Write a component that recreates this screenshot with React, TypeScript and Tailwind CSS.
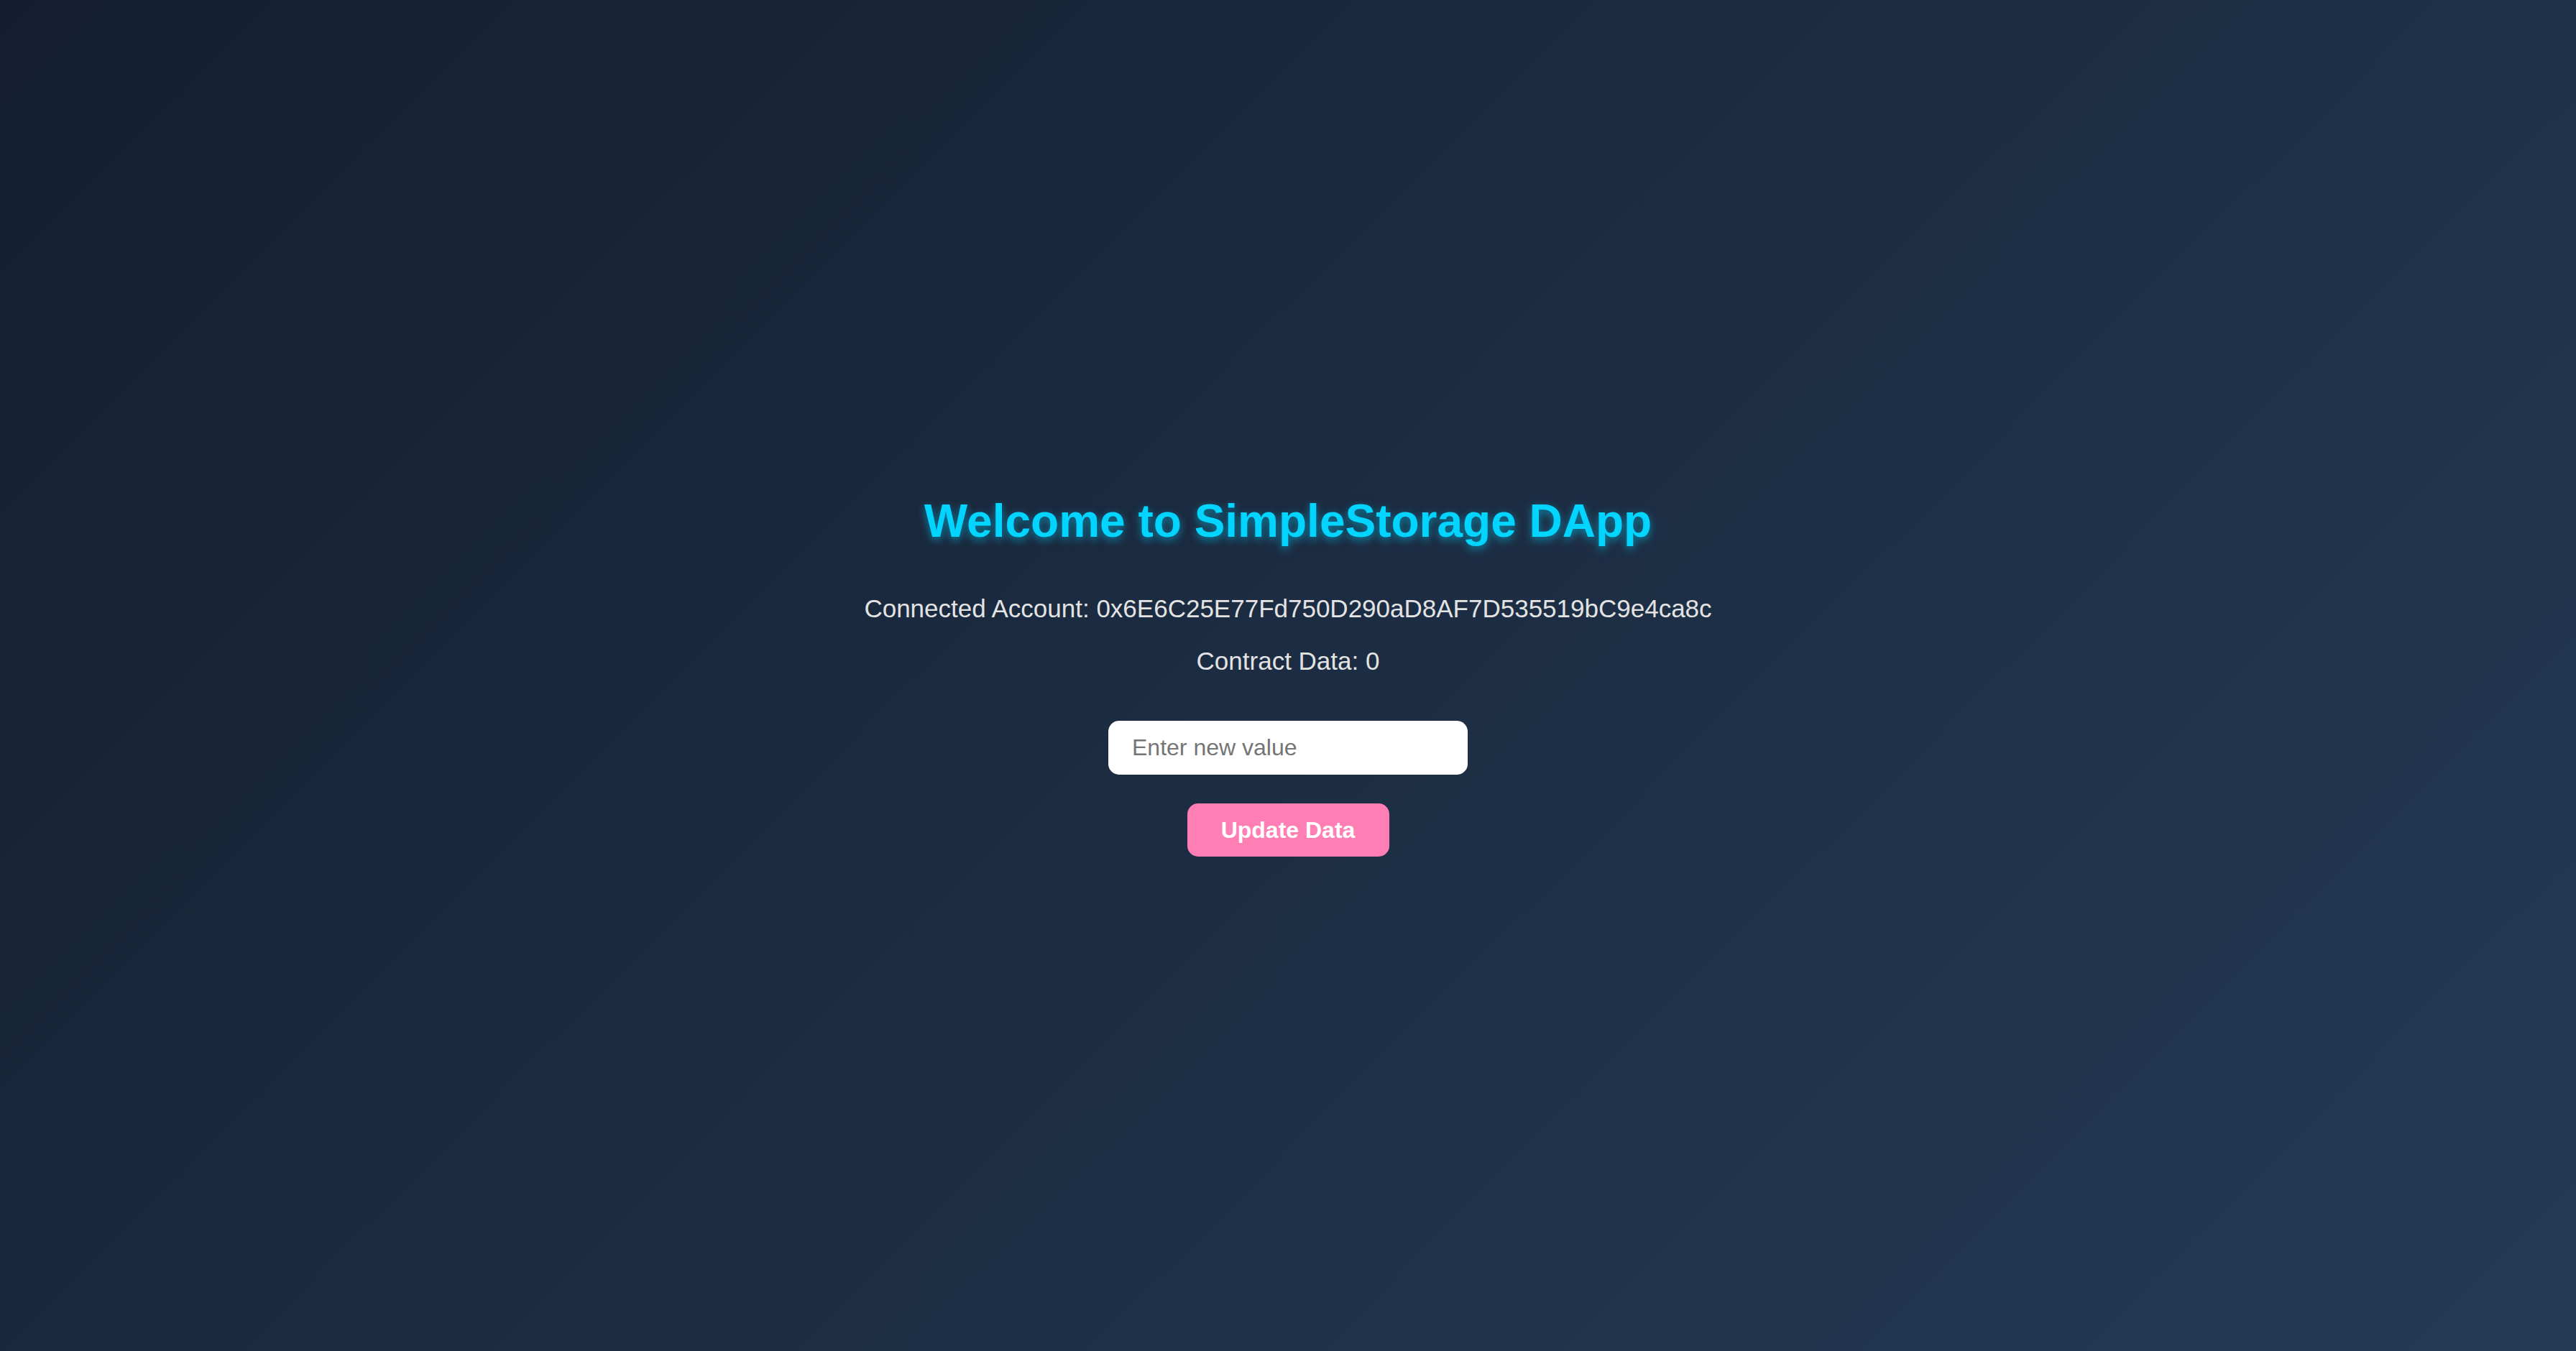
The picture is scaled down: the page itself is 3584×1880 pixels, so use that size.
import React from "react";

export default function App() {
  return (
    <div
      className="min-h-screen w-full flex flex-col items-center justify-center bg-[linear-gradient(135deg,#141e30,#243b55)]"
      style={{ fontFamily: '"Liberation Sans", Arial, sans-serif' }}
    >
      <h1 className="text-[64px] leading-[74px] font-bold text-[#00d4ff] [text-shadow:0_4px_12px_rgba(0,212,255,0.55)]">
        Welcome to SimpleStorage DApp
      </h1>
      <p className="mt-[64px] text-[35px] leading-[41px] text-[#e3e3e3]">
        Connected Account: 0x6E6C25E77Fd750D290aD8AF7D535519bC9e4ca8c
      </p>
      <p className="mt-[32px] text-[35px] leading-[41px] text-[#e3e3e3]">
        Contract Data: 0
      </p>
      <input
        type="text"
        placeholder="Enter new value"
        className="mt-[63px] w-[500px] h-[75px] rounded-[15px] bg-white pl-[33px] pr-[20px] text-[32px] text-[#333] placeholder:text-[#757575] outline-none border-0"
      />
      <button className="mt-[40px] w-[281px] h-[74px] rounded-[15px] bg-[#ff7eb3] text-white font-bold text-[32px]">
        Update Data
      </button>
    </div>
  );
}
